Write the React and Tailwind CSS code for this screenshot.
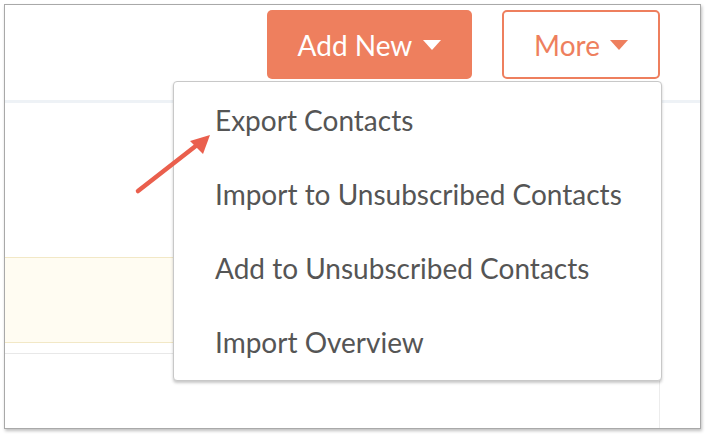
export default function App() {
  const items = [
    "Export Contacts",
    "Import to Unsubscribed Contacts",
    "Add to Unsubscribed Contacts",
    "Import Overview",
  ];

  return (
    <div
      className="w-[706px] h-[434px] bg-white p-[4px] pr-[5px] pb-[5px]"
      style={{ fontFamily: "Lato, 'Open Sans', sans-serif" }}
    >
      <div className="relative w-full h-full border border-[#a9a9a9] shadow-[1px_2px_3px_rgba(0,0,0,0.25)] bg-white flex flex-col overflow-hidden">
        {/* header */}
        <div className="h-[95px] flex items-start justify-end gap-[30px] pt-[5px] pr-[40px]">
          <button className="w-[205px] h-[69px] rounded-[5px] bg-[#ee7f5e] text-white text-[28px] flex items-center justify-center gap-[11px]">
            <span>Add New</span>
            <Caret color="#ffffff" />
          </button>
          <button className="w-[158px] h-[69px] rounded-[5px] border-2 border-[#ee7f5e] bg-white text-[#ee7f5e] text-[28px] flex items-center justify-center gap-[10px]">
            <span>More</span>
            <Caret color="#ee7f5e" />
          </button>
        </div>
        <div className="h-[3px] bg-[#eef2f6]" />

        {/* content */}
        <div className="flex-1 flex">
          <div className="flex-1 border-r border-[#ececec] flex flex-col">
            <div className="h-[154px]" />
            <div className="h-[86px] bg-[#fffcf2] border-y border-[#f2e8c6]" />
            <div className="h-[10px]" />
            <div className="h-[1px] bg-[#e8e8e8]" />
          </div>
          <div className="w-[40px]" />
        </div>

        {/* dropdown */}
        <div className="absolute left-[168px] top-[76px] w-[489px] border border-[#c8c8c8] rounded-[4px] bg-white shadow-[0_2px_3px_rgba(0,0,0,0.22)] py-[1px]">
          {items.map((item) => (
            <div
              key={item}
              className="h-[74px] flex items-center pl-[41px] text-[28px] text-[#555555]"
            >
              {item}
            </div>
          ))}
        </div>

        {/* annotation arrow */}
        <svg
          className="absolute left-[126px] top-[121px]"
          width="90"
          height="80"
          viewBox="0 0 90 80"
        >
          <line
            x1="7"
            y1="65"
            x2="66"
            y2="19"
            stroke="#ea5f4d"
            strokeWidth="4.5"
            strokeLinecap="round"
          />
          <polygon points="79,9 59,15 72,28" fill="#ea5f4d" />
        </svg>
      </div>
    </div>
  );
}

function Caret({ color }) {
  return (
    <svg width="18" height="10" viewBox="0 0 18 10">
      <polygon points="0,0 18,0 9,10" fill={color} />
    </svg>
  );
}
